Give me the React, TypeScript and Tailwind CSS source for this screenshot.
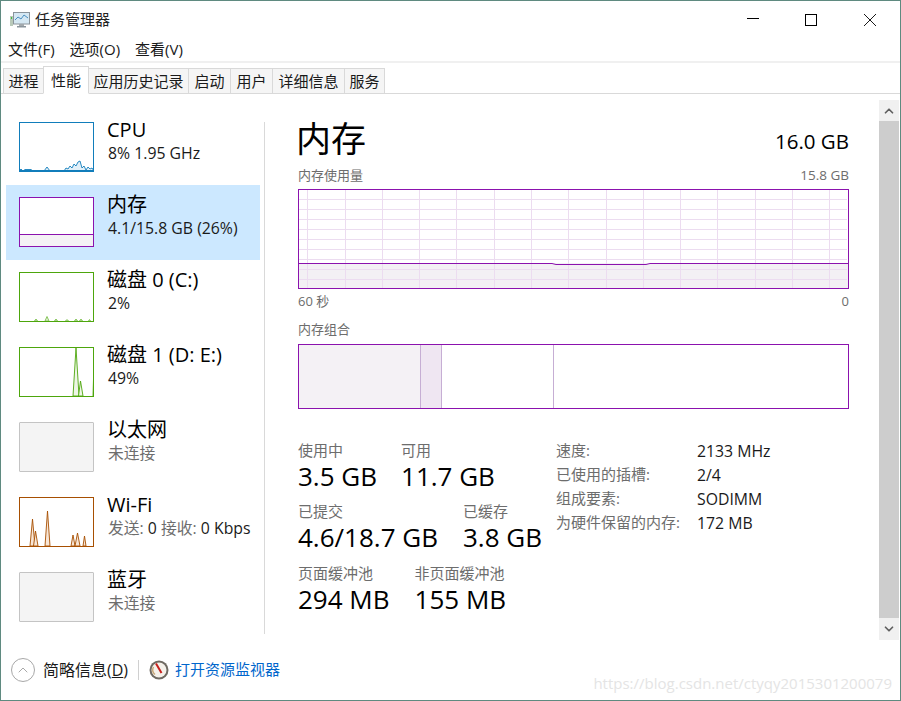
import { ChevronDown, ChevronUp } from "lucide-react";

const TABS = [
  { name: "进程", w: "w-[41px]" },
  { name: "性能", w: "w-[46px]", active: true },
  { name: "应用历史记录", w: "w-[101px]" },
  { name: "启动", w: "w-[43px]" },
  { name: "用户", w: "w-[43px]" },
  { name: "详细信息", w: "w-[73px]" },
  { name: "服务", w: "w-[41px]" },
];

const CHARTS: Record<string, { line: string; fill: string; paths: string[] }> = {
  cpu: {
    line: "#117dbb",
    fill: "#e3f0f8",
    paths: [
      "M0 49 L2 47 L4 49 L6 47.5 L12 47.5 L14 49 L25 49 L28 45 L31 49 L45 49 L47 46 L49 47 L51 44 L53 46 L55 42 L57 44 L59 40 L61 39 L63 46 L65 44 L67 48 L69 45 L71 47 L73 46 L75 49 Z",
    ],
  },
  disk0: {
    line: "#7dbf4d",
    fill: "#e6f2dc",
    paths: [
      "M15.5 49 L17 47 L18.5 49 Z",
      "M26 49 L28 44.5 L30 49 Z",
      "M35.5 49 L37 47 L38.5 49 Z",
      "M46.5 49 L48 47.5 L49.5 49 Z",
      "M55.5 49 L57 47 L58.5 49 Z",
      "M60.5 49 L62 47 L63.5 49 Z",
      "M69.5 49 L70.5 47.5 L71.5 49 Z",
    ],
  },
  disk1: {
    line: "#4da60c",
    fill: "#eef6e6",
    paths: ["M54 49 L57 1 L60 49 Z", "M59.5 49 L61.5 34 L64 49 Z", "M74 49 L74.6 29 L75 49 Z"],
  },
  wifi: {
    line: "#a74f01",
    fill: "#f8e6d6",
    paths: [
      "M11 49 L13.5 22 L16 49 Z",
      "M14.5 49 L16.5 34 L19 49 Z",
      "M26 49 L28.5 14 L31 49 Z",
      "M52 49 L54 38 L56 49 Z",
      "M56 49 L58.5 36 L61 49 Z",
      "M64 49 L65.5 39 L67 49 Z",
    ],
  },
};

const ITEMS = [
  { title: "CPU", sub: "8% 1.95 GHz", thumb: "cpu" },
  { title: "内存", sub: "4.1/15.8 GB (26%)", thumb: "mem", selected: true },
  { title: "磁盘 0 (C:)", sub: "2%", thumb: "disk0" },
  { title: "磁盘 1 (D: E:)", sub: "49%", thumb: "disk1" },
  { title: "以太网", sub: "未连接", thumb: "off", gray: true },
  { title: "Wi-Fi", sub: "0 Kbps", wifi: true, thumb: "wifi" },
  { title: "蓝牙", sub: "未连接", thumb: "off", gray: true },
];

const SPECS = [
  { label: "速度:", value: "2133 MHz" },
  { label: "已使用的插槽:", value: "2/4" },
  { label: "组成要素:", value: "SODIMM" },
  { label: "为硬件保留的内存:", value: "172 MB" },
];

const V_LINES = [307, 345, 382, 419, 456, 494, 531, 568, 606, 643, 680, 717, 755, 792, 829];
const H_LINES = [199, 209, 219, 229, 239, 249, 259, 269, 279];

function Thumb({ kind }: { kind: string }) {
  if (kind === "off") {
    return <div className="w-[75px] h-[50px] shrink-0 bg-[#f4f4f4] border border-[#c4c4c4] rounded-[1px]" />;
  }
  if (kind === "mem") {
    return (
      <div className="w-[75px] h-[50px] shrink-0 flex flex-col justify-end bg-white border border-[#8b12ae]">
        <div className="h-[12px] bg-[#f4f1f5] border-t border-[#8b12ae]" />
      </div>
    );
  }
  const c = CHARTS[kind];
  return (
    <svg width="75" height="50" viewBox="0 0 75 50" className="shrink-0 bg-white">
      {c.paths.map((d) => (
        <path key={d} d={d} fill={c.fill} stroke={c.line} strokeWidth="0.9" />
      ))}
      <rect x="0.5" y="0.5" width="74" height="49" fill="none" stroke={kind === "disk0" ? "#4da60c" : c.line} />
      {kind === "cpu" && <rect x="0" y="48" width="75" height="2" fill={c.line} />}
    </svg>
  );
}

function SidebarItem({ item }: { item: (typeof ITEMS)[number] }) {
  return (
    <div className={`h-[75px] flex pl-[13px] pt-[12px] ${item.selected ? "bg-[#cce8ff]" : ""}`}>
      <Thumb kind={item.thumb} />
      <div className="ml-[13px] -mt-[4px]">
        <div className="text-[20px] leading-[24px] text-black whitespace-nowrap">{item.title}</div>
        <div className={`text-[15.8px] leading-[20px] mt-[1px] pl-[1px] whitespace-nowrap ${item.gray ? "text-[#6d6d6d]" : "text-[#1a1a1a]"}`}>
          {item.wifi ? (
            <>
              <span className="text-[#6d6d6d]">发送:</span> 0 <span className="text-[#6d6d6d]">接收:</span> 0 Kbps
            </>
          ) : (
            item.sub
          )}
        </div>
      </div>
    </div>
  );
}

function Stat({ label, value }: { label: string; value: string }) {
  return (
    <div>
      <div className="text-[15px] leading-[20px] text-[#6d6d6d]">{label}</div>
      <div className="text-[26px] leading-[32px] text-black whitespace-nowrap">{value}</div>
    </div>
  );
}

function MemoryChart() {
  return (
    <svg width="551" height="100" viewBox="298 189 551 100" className="block">
      <rect x="298" y="263" width="551" height="26" fill="#f3f0f4" />
      {V_LINES.map((x) => (
        <line key={x} x1={x + 0.5} y1="189" x2={x + 0.5} y2="289" stroke="#ecdcf0" />
      ))}
      {H_LINES.map((y) => (
        <line key={y} x1="298" y1={y + 0.5} x2="847" y2={y + 0.5} stroke="#ecdcf0" />
      ))}
      <path d="M298 263.5 H552 L556 264.5 H646 L650 263.5 H849" fill="none" stroke="#8b12ae" />
      <rect x="298.5" y="189.5" width="550" height="99" fill="none" stroke="#8b12ae" />
    </svg>
  );
}

function AppIcon() {
  return (
    <svg width="20" height="16" viewBox="0 0 20 16" className="shrink-0">
      <rect x="0" y="4" width="3" height="10" fill="#b9c9b9" />
      <rect x="1" y="5" width="1" height="2" fill="#3fbf3f" />
      <rect x="3.5" y="0.5" width="16" height="11.5" fill="#d5e8f3" stroke="#8a949b" />
      <path d="M5 8 L8 5 L11 7 L14 3 L18 6" fill="none" stroke="#4a8fc0" strokeWidth="1" />
      <rect x="9" y="12" width="5" height="2" fill="#a3a9ad" />
      <rect x="7" y="14" width="9" height="1.5" fill="#8a949b" />
    </svg>
  );
}

function MonitorIcon() {
  return (
    <svg width="20" height="20" viewBox="0 0 20 20" className="shrink-0">
      <circle cx="10" cy="10" r="9.5" fill="#6f6a62" />
      <circle cx="10" cy="10" r="7.5" fill="#f5f1ea" />
      <path d="M4.5 7 A6 6 0 0 0 6 14.5" fill="none" stroke="#c9a878" strokeWidth="1.5" />
      <path d="M7 3.5 L12.5 13" stroke="#c8201c" strokeWidth="2" />
    </svg>
  );
}

function WindowButtons() {
  return (
    <div className="ml-auto mr-[24px] flex items-center text-black">
      <svg width="12" height="12" viewBox="0 0 12 12" className="-mt-[2px]">
        <line x1="0" y1="5.5" x2="12" y2="5.5" stroke="currentColor" />
      </svg>
      <svg width="12" height="12" viewBox="0 0 12 12" className="ml-[46px]">
        <rect x="0.5" y="0.5" width="11" height="11" fill="none" stroke="currentColor" />
      </svg>
      <svg width="12" height="12" viewBox="0 0 12 12" className="ml-[47px]">
        <path d="M0 0 L12 12 M12 0 L0 12" stroke="currentColor" strokeWidth="0.9" />
      </svg>
    </div>
  );
}

export default function App() {
  return (
    <div className="w-[901px] h-[701px] relative flex flex-col bg-white border border-[#5f8a80] font-['Open_Sans','Noto_Sans_CJK_SC',sans-serif] overflow-hidden">
      {/* title bar */}
      <div className="h-[37px] flex items-center pl-[9px] shrink-0">
        <AppIcon />
        <span className="ml-[5px] text-[15px] text-[#222]">任务管理器</span>
        <WindowButtons />
      </div>

      {/* menu */}
      <div className="h-[25px] flex items-center gap-[15px] pl-[7px] text-[15px] text-[#1a1a1a] border-b-2 border-[#f0f0f0] shrink-0">
        <span>文件(F)</span>
        <span>选项(O)</span>
        <span>查看(V)</span>
      </div>

      {/* tabs */}
      <div className="h-[31px] flex items-end pl-[2px] border-b border-[#d9d9d9] shrink-0">
        {TABS.map((t) => (
          <div
            key={t.name}
            className={`${t.w} flex items-center justify-center text-[15px] text-[#1a1a1a] border border-[#d9d9d9] -mr-px ${
              t.active ? "h-[28px] bg-white border-b-white -mb-px relative" : "h-[25px] bg-[#f5f5f5] border-b-0"
            }`}
          >
            {t.name}
          </div>
        ))}
      </div>

      {/* content */}
      <div className="flex-1 flex min-h-0">
        <div className="w-[259px] pl-[5px] pt-[16px] shrink-0">
          {ITEMS.map((item) => (
            <SidebarItem key={item.title} item={item} />
          ))}
        </div>

        <div className="w-px bg-[#d9d9d9] ml-[4px] mt-[28px] h-[512px] shrink-0" />

        <div className="w-[551px] ml-[33px] shrink-0">
          <div className="flex items-end justify-between mt-[23px] h-[44px]">
            <span className="text-[35px] leading-[44px] text-black -ml-[2px]">内存</span>
            <span className="text-[20.5px] leading-[26px] mb-[7px] text-black">16.0 GB</span>
          </div>
          <div className="flex justify-between text-[13px] leading-[18px] mt-[5px] mb-[5px] text-[#6d6d6d]">
            <span>内存使用量</span>
            <span className="text-[13.5px]">15.8 GB</span>
          </div>
          <MemoryChart />
          <div className="flex justify-between text-[13px] leading-[18px] mt-[3px] text-[#6d6d6d]">
            <span>60 秒</span>
            <span>0</span>
          </div>
          <div className="text-[13px] leading-[18px] mt-[10px] text-[#6d6d6d]">内存组合</div>
          <div className="h-[65px] mt-[6px] flex border border-[#8b12ae]">
            <div className="w-[122px] bg-[#f4f1f5] border-r border-[#c6aed4]" />
            <div className="w-[21px] bg-[#efe6f2] border-r border-[#c6aed4]" />
            <div className="w-[112px] border-r border-[#c6aed4]" />
          </div>

          <div className="flex mt-[31px]">
            <div className="w-[258px] shrink-0">
              <div className="flex gap-[24px]">
                <Stat label="使用中" value="3.5 GB" />
                <Stat label="可用" value="11.7 GB" />
              </div>
              <div className="flex gap-[25px] mt-[9px]">
                <Stat label="已提交" value="4.6/18.7 GB" />
                <Stat label="已缓存" value="3.8 GB" />
              </div>
              <div className="flex gap-[25px] mt-[10px]">
                <Stat label="页面缓冲池" value="294 MB" />
                <Stat label="非页面缓冲池" value="155 MB" />
              </div>
            </div>
            <div className="grid grid-cols-[141px_1fr] auto-rows-[24px] items-center text-[15.8px] text-[#1a1a1a] -mt-[2px]">
              {SPECS.map((s) => (
                <div key={s.label} className="contents">
                  <span className="text-[15px] text-[#6d6d6d] whitespace-nowrap">{s.label}</span>
                  <span className="mt-[4px]">{s.value}</span>
                </div>
              ))}
            </div>
          </div>
        </div>

        {/* scrollbar */}
        <div className="w-[20px] ml-[30px] mt-[6px] h-[540px] flex flex-col shrink-0">
          <div className="h-[21px] bg-[#f0f0f0] flex items-center justify-center text-[#606060]">
            <ChevronUp size={14} strokeWidth={3} />
          </div>
          <div className="flex-1 bg-[#cdcdcd]" />
          <div className="h-[22px] bg-[#f0f0f0] flex items-center justify-center text-[#606060]">
            <ChevronDown size={14} strokeWidth={3} />
          </div>
        </div>
      </div>

      {/* footer */}
      <div className="h-[60px] flex items-center pl-[10px] pb-[1px] shrink-0">
        <div className="w-[24px] h-[24px] rounded-full border border-[#a8a8a8] flex items-center justify-center text-[#a8a8a8]">
          <ChevronUp size={16} strokeWidth={1.5} />
        </div>
        <span className="ml-[8px] text-[16px] text-[#1a1a1a]">
          简略信息(<span className="underline">D</span>)
        </span>
        <div className="w-px h-[20px] bg-[#d0d0d0] ml-[10px]" />
        <div className="ml-[10px]">
          <MonitorIcon />
        </div>
        <span className="ml-[6px] text-[15px] text-[#0066cc]">打开资源监视器</span>
      </div>

      {/* csdn watermark */}
      <span className="absolute right-[8px] bottom-[8px] text-[15px] leading-[18px] text-[#d9d9d9] opacity-70">
        https://blog.csdn.net/ctyqy2015301200079
      </span>
    </div>
  );
}
